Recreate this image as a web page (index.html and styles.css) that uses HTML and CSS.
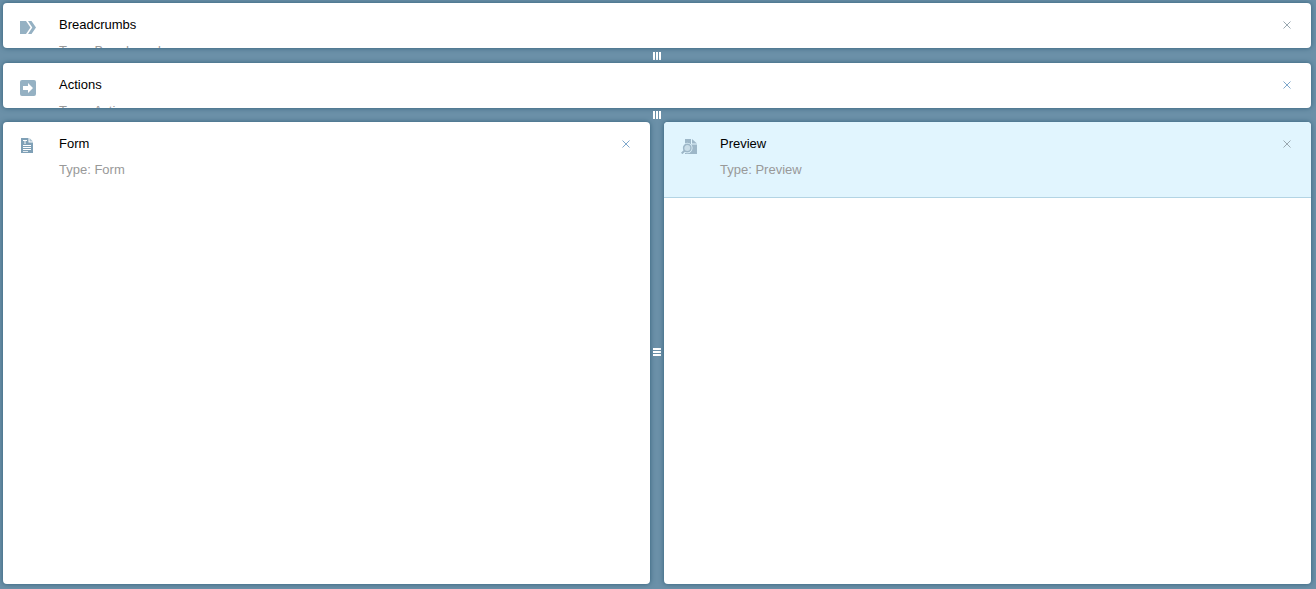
FILE: index.html
```html
<!DOCTYPE html>
<html lang="en">
<head>
<meta charset="utf-8">
<title>Layout</title>
<link rel="stylesheet" href="styles.css">
</head>
<body>
<div class="app">
  <section class="pane pane-short">
    <div class="item">
      <svg class="icon icon-crumbs" viewBox="0 0 16 13"><path d="M0 0h6l4.500 6.500L6 13H0z"/><path d="M8 0h3.500L16 6.500 11.500 13H8l4.300-6.500z"/></svg>
      <div class="info"><div class="title">Breadcrumbs</div><div class="type">Type: Breadcrumbs</div></div>
      <svg class="close" viewBox="0 0 8 8"><path d="M.5.5l7 7M7.500.5l-7 7"/></svg>
    </div>
  </section>
  <div class="split-h split-first"><span class="grip-v"><i></i><i></i><i></i></span></div>
  <section class="pane pane-short">
    <div class="item">
      <svg class="icon icon-action" viewBox="0 0 16 16"><path fill-rule="evenodd" d="M2 0h12a2 2 0 0 1 2 2v12a2 2 0 0 1-2 2H2a2 2 0 0 1-2-2V2a2 2 0 0 1 2-2zm1 6v4h5v3l5-5-5-5v3z"/></svg>
      <div class="info"><div class="title">Actions</div><div class="type">Type: Actions</div></div>
      <svg class="close close-blue" viewBox="0 0 8 8"><path d="M.5.5l7 7M7.500.5l-7 7"/></svg>
    </div>
  </section>
  <div class="split-h"><span class="grip-v"><i></i><i></i><i></i></span></div>
  <div class="row">
    <section class="pane pane-col">
      <div class="item item-full">
        <svg class="icon icon-form" viewBox="0 0 12 15"><path fill-rule="evenodd" d="M0 0h7.500v4.500H12V15H0zM2 2v1h1.500v3h1V3H6V2zM2 7v1h8V7zm0 2v1h8V9zm0 2v1h8v-1zm0 2v.8h5V13z"/><path class="soft" d="M8.500 0L12 3.500H8.500z"/></svg>
        <div class="info"><div class="title">Form</div><div class="type">Type: Form</div></div>
        <svg class="close close-blue" viewBox="0 0 8 8"><path d="M.5.5l7 7M7.500.5l-7 7"/></svg>
      </div>
    </section>
    <div class="split-v"><span class="grip-h"><i></i><i></i><i></i></span></div>
    <section class="pane pane-col">
      <div class="item item-full item-active">
        <svg class="icon icon-preview" viewBox="0 0 16 15"><path d="M4 0h6v5.500h6V15H4z"/><path d="M11 0l5 4.500h-5z"/><circle class="lens-gap" cx="6.300" cy="9" r="5.200"/><circle class="lens" cx="6.300" cy="9" r="3.700"/><path class="handle" d="M3.500 11.800L.7 14.500"/></svg>
        <div class="info"><div class="title">Preview</div><div class="type">Type: Preview</div></div>
        <svg class="close" viewBox="0 0 8 8"><path d="M.5.5l7 7M7.500.5l-7 7"/></svg>
      </div>
    </section>
  </div>
</div>
</body>
</html>
```
FILE: styles.css
```css
* { box-sizing: border-box; }
html, body { margin: 0; height: 100%; }
body {
  background: #6b90a8;
  font-family: "Liberation Sans", Arial, sans-serif;
  font-size: 13px;
  overflow: hidden;
}
.app {
  height: 589px;
  padding: 3px 5px 5px 3px;
  display: flex;
  flex-direction: column;
}
.pane {
  background: #fff;
  border-radius: 4px;
  overflow: hidden;
  box-shadow: 0 0 5px rgb(50, 95, 120);
}
.pane-short { height: 45px; flex: none; }
.pane-col { flex: 1 1 0; min-width: 0; }
.row { flex: 1; display: flex; min-height: 0; }
.split-h {
  height: 14px;
  flex: none;
  display: flex;
  align-items: center;
  justify-content: center;
}
.split-first { height: 15px; }
.split-v {
  width: 14px;
  flex: none;
  display: flex;
  align-items: center;
  justify-content: center;
}
.grip-v { display: flex; gap: 1px; }
.grip-v i { display: block; width: 2px; height: 8px; background: #fff; }
.grip-h { display: flex; flex-direction: column; gap: 1px; margin-top: -2px; }
.grip-h i { display: block; width: 8px; height: 2px; background: #fff; }
.item {
  display: flex;
  align-items: flex-start;
  padding: 14px 20px 20px 17px;
  height: 76px;
}
.item-active {
  background: #e1f5fe;
  border-bottom: 1px solid #b3d4e4;
}
.icon { width: 16px; flex: none; fill: #95b1c3; }
.icon-crumbs { height: 13px; margin-top: 4px; }
.icon-action { height: 16px; margin-top: 3px; }
.icon-form { width: 12px; height: 15px; fill: #7fa0b6; margin: 2px 3px 0 1px; }
.icon-form .soft { fill: #a9c0cf; }
.icon-preview { height: 15px; margin-top: 3px; fill: #9db7c8; }
.lens-gap { fill: #e1f5fe; }
.lens { fill: #c9dde8; stroke: #9db7c8; stroke-width: 1.500; }
.handle { fill: none; stroke: #9db7c8; stroke-width: 2; }
.info { flex: 1; min-width: 0; margin-left: 23px; }
.title { color: #000; line-height: 16px; height: 16px; }
.type { color: #999; line-height: 16px; margin-top: 10px; white-space: nowrap; }
.close { width: 8px; height: 8px; flex: none; margin-top: 4px; fill: none; stroke: #9aa8b0; stroke-width: 1; }
.close-blue { stroke: #7fa8cc; }
```
